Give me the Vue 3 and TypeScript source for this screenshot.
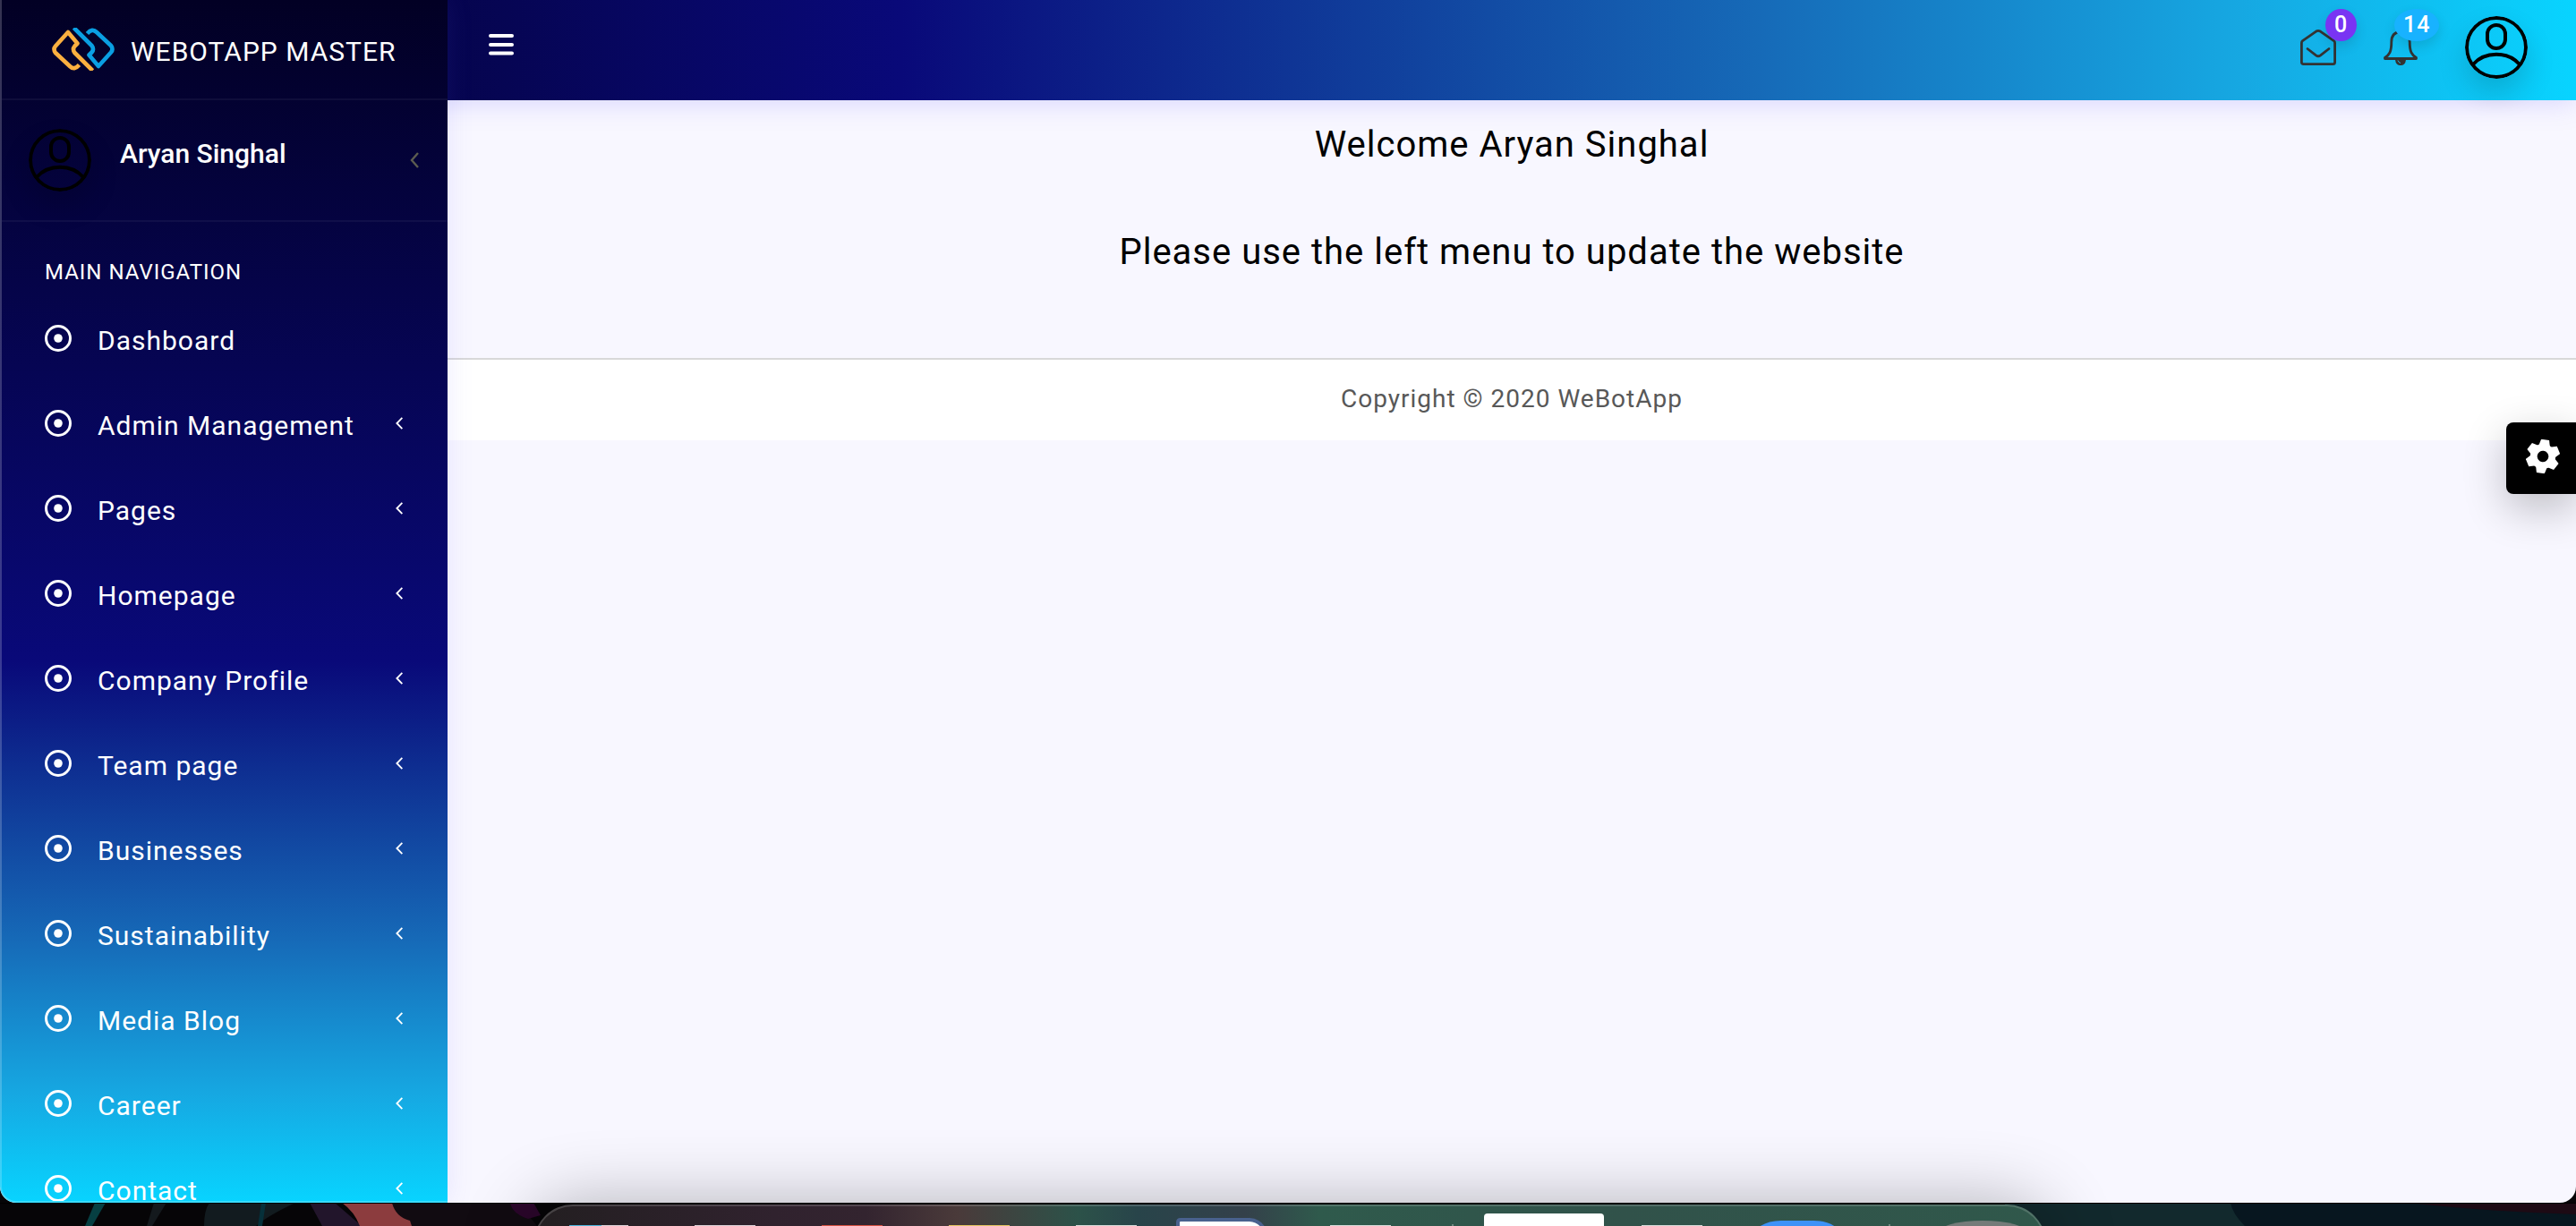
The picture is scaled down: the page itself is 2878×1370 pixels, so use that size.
<script setup lang="ts">
interface NavItem {
  label: string
  expandable: boolean
}

const labels: string[] = [
  'Dashboard',
  'Admin Management',
  'Pages',
  'Homepage',
  'Company Profile',
  'Team page',
  'Businesses',
  'Sustainability',
  'Media Blog',
  'Career',
  'Contact',
]

const navItems: NavItem[] = labels.map((label, index) => ({ label, expandable: index > 0 }))
</script>

<template>
  <div class="desktop">
    <div class="window">
      <aside class="sidebar">
        <a class="brand" href="#">
          <svg class="brand-logo" viewBox="0 0 70 48" fill="none" stroke-width="4.6" stroke-linejoin="round" aria-hidden="true">
            <path stroke="#fbb040" d="M30.500 41.500 Q25 48 20 43 L4 28 Q1 24 4 20.500 L18 5 L28.500 17.500 L25.500 20.500 Q22.500 24 25.500 28 L45.500 48" />
            <path stroke="#0a9fe3" d="M39.500 6.500 Q45 0 50 5 L66 20 Q69 24 66 27.500 L52 43 L41.500 30.500 L44.500 27.500 Q47.500 24 44.500 20 L24.500 0" />
          </svg>
          <span class="brand-name">WEBOTAPP MASTER</span>
        </a>

        <button class="user-panel" type="button">
          <svg class="avatar" viewBox="0 0 70 70" fill="none" stroke="#000" stroke-width="4" aria-hidden="true">
            <circle cx="35" cy="35" r="33" />
            <rect x="25" y="10" width="20" height="26" rx="10" />
            <path d="M9 54 C22 39 48 39 61 54" />
          </svg>
          <span class="user-name">Aryan Singhal</span>
          <svg class="user-arrow" viewBox="0 0 10 18" fill="none" stroke="#5c5c50" stroke-width="2.4" aria-hidden="true">
            <path d="M9 1 L2 9 L9 17" />
          </svg>
        </button>

        <h2 class="nav-title">MAIN NAVIGATION</h2>
        <nav>
          <ul class="nav-list">
            <li v-for="item in navItems" :key="item.label">
              <a class="nav-link" href="#">
                <svg class="nav-dot" viewBox="0 0 30 30" aria-hidden="true">
                  <circle cx="15" cy="15" r="13.5" fill="none" stroke="#fff" stroke-width="3" />
                  <circle cx="15" cy="15" r="4.8" fill="#fff" />
                </svg>
                <span class="nav-label">{{ item.label }}</span>
                <svg v-if="item.expandable" class="nav-arrow" viewBox="0 0 8 14" fill="none" stroke="#fff" stroke-width="1.9" aria-hidden="true">
                  <path d="M7.4 .8 L1.4 7 L7.4 13.2" />
                </svg>
              </a>
            </li>
          </ul>
        </nav>
      </aside>

      <div class="page">
        <header class="topbar">
          <button class="icon-button menu-button" type="button" aria-label="Toggle menu">
            <svg width="28" height="24" viewBox="0 0 28 24" stroke="#fff" stroke-width="4" stroke-linecap="round" aria-hidden="true">
              <path d="M2 2 H26 M2 12 H26 M2 21.500 H26" />
            </svg>
          </button>

          <div class="topbar-actions">
            <button class="icon-button" type="button" aria-label="Messages">
              <svg width="40" height="40" viewBox="0 0 40 40" fill="none" stroke="#333" stroke-width="2.8" stroke-linecap="round" stroke-linejoin="round" aria-hidden="true">
                <path d="M1.400 15 Q1.400 13.600 2.500 12.700 L17.600 2.100 Q20 .8 22.400 2.100 L37.500 12.700 Q38.600 13.600 38.600 15 V36.500 Q38.600 38.600 36.500 38.600 H3.500 Q1.400 38.600 1.400 36.500 Z" />
                <path d="M8 21.500 L17.500 28.800 Q20 30.600 22.500 28.800 L32 21.500" />
              </svg>
              <span class="badge badge-purple">0</span>
            </button>
            <button class="icon-button" type="button" aria-label="Notifications">
              <svg width="38" height="40" viewBox="0 0 38 40" fill="none" stroke="#333" stroke-width="2.800" stroke-linejoin="round" aria-hidden="true">
                <path d="M19 2.500 C11 3 8.800 8 8.800 14 C8.800 25 6.500 28 1.500 31.500 V32.500 H36.500 V31.500 C31.500 28 29.200 25 29.200 14 C29.200 8 27 3 19 2.500 Z" />
                <path d="M14.500 34 Q15 38.500 19 38.700 Q23 38.500 23.500 34 Z" fill="#333" />
                <path d="M16 34.500 Q17 37 19 37.500" stroke="#12bdf0" stroke-width="1" />
              </svg>
              <span class="badge badge-blue">14</span>
            </button>
            <button class="icon-button" type="button" aria-label="Account">
              <svg class="avatar" viewBox="0 0 70 70" fill="none" stroke="#000" stroke-width="4" aria-hidden="true">
                <circle cx="35" cy="35" r="33" />
                <rect x="25" y="10" width="20" height="26" rx="10" />
                <path d="M9 54 C22 39 48 39 61 54" />
              </svg>
            </button>
          </div>
        </header>

        <main class="content">
          <h1 class="message">Welcome Aryan Singhal</h1>
          <p class="message">Please use the left menu to update the website</p>
        </main>

        <footer class="footer">Copyright © 2020 WeBotApp</footer>
      </div>

      <button class="settings" type="button" aria-label="Settings">
        <svg width="38" height="38" viewBox="-19 -19 38 38" aria-hidden="true">
          <g transform="rotate(8)">
            <circle r="10.200" fill="none" stroke="#fff" stroke-width="7.800" />
            <path v-for="n in 6" :key="n" :transform="`rotate(${n * 60})`" fill="#fff" d="M-6.500 -11 L-4.500 -18.800 H4.500 L6.500 -11 Z" />
          </g>
        </svg>
      </button>
    </div>

    <div class="wallpaper">
      <svg class="wallpaper-art" viewBox="0 0 2878 26" preserveAspectRatio="none" aria-hidden="true">
        <rect width="2878" height="26" fill="#060507" />
        <rect x="2240" width="400" height="26" fill="#12292d" />
        <path fill="#07161f" d="M2492 0 H2878 V26 H2508 Q2494 12 2492 0 Z" />
        <path fill="#1d0a14" d="M2690 0 H2878 V13 Q2780 10 2690 0 Z" />
        <path fill="#063f42" d="M106 0 H118 L103 26 H95 Z" />
        <path fill="#14191d" d="M172 0 H186 L170 26 H164 Z" />
        <path fill="#121b1f" d="M234 0 H330 Q300 14 286 26 H228 Q228 8 234 0 Z" />
        <path fill="#06303a" d="M292 0 H297 L293 26 H288 Z" />
        <path fill="#22152b" d="M346 0 H374 L404 26 H360 Z" />
        <path fill="#8c3c3e" d="M382 0 H438 Q446 18 474 20 L466 26 H402 Q396 10 382 0 Z" />
        <path fill="#110b11" d="M438 0 H580 L600 26 H460 L458 20 Q442 16 438 0 Z" />
        <path fill="#2b062b" d="M570 0 H596 L604 14 L590 18 Q572 12 570 0 Z" />
        <rect y="0" width="2878" height="1" fill="#000" />
      </svg>
      <div class="dock">
        <svg class="dock-apps" viewBox="0 0 1686 22" preserveAspectRatio="xMidYMin slice" aria-hidden="true">
          <path stroke-width="2" stroke="#4eb6df" d="M38 22 H74" />
          <path stroke-width="2" stroke="#ddd3d8" d="M74 22 H104 M178 22 H246" />
          <path stroke-width="2" stroke="#d95343" d="M320 22 H388" />
          <path stroke-width="2" stroke="#e5c562" d="M462 22 H530" />
          <path stroke-width="2" stroke="#d8dcda" d="M604 22 H672 M888 22 H956 M1236 22 H1304" />
          <path fill="#fff" stroke="#49618e" stroke-width="4" d="M718 30 V18 Q718 15 721 15 H798 Q812 16 816 30" />
          <rect x="1060" y="8" width="134" height="30" rx="4" fill="#fff" />
          <path fill="#3d92f8" d="M1366 24 Q1376 16 1392 16 H1428 Q1444 16 1454 24 Z" />
          <ellipse cx="1617" cy="30" rx="50" ry="14" fill="#757b79" />
          <path stroke="#6f8980" stroke-width="2" d="M1025 20 V26 M1513 20 V26" />
        </svg>
      </div>
    </div>
  </div>
</template>

<style>
body {
  margin: 0;
}
</style>

<style scoped>
.desktop {
  display: flex;
  flex-direction: column;
  height: 100vh;
  overflow: hidden;
  background: #060507;
  color: #000;
  font-family: Roboto, "Liberation Sans", sans-serif;
  font-size: 30px;
  letter-spacing: 1px;
}

.desktop * {
  box-sizing: border-box;
}

button {
  padding: 0;
  border: 0;
  background: none;
  color: inherit;
  font: inherit;
  letter-spacing: inherit;
  cursor: pointer;
}

a {
  color: inherit;
  text-decoration: none;
}

svg {
  display: block;
  flex: none;
}

.window {
  position: relative;
  display: flex;
  flex: 1;
  min-height: 0;
  overflow: hidden;
  border-radius: 0 0 18px 18px;
  background: #f8f7ff;
}

/* Sidebar */
.sidebar {
  z-index: 2;
  flex: none;
  width: 500px;
  overflow: hidden;
  border: 0 solid rgba(255, 255, 255, 0.2);
  border-width: 0 0 2px 2px;
  border-bottom-left-radius: 18px;
  background: linear-gradient(180deg, #020024 0%, #090979 55%, #1669b7 78%, #16a8e2 91%, #08d4ff 100%) border-box;
  box-shadow: 0 0 30px rgba(100, 90, 250, 0.12);
  color: #fff;
}

.brand {
  display: flex;
  align-items: center;
  gap: 18px;
  height: 112px;
  padding-left: 56px;
  border-bottom: 2px solid rgba(255, 255, 255, 0.05);
}

.brand-logo {
  width: 70px;
  height: 48px;
}

.brand-name {
  padding-top: 4px;
}

.user-panel {
  display: flex;
  width: 100%;
  height: 136px;
  padding: 32px 32px 0 30px;
  border-bottom: 2px solid rgba(255, 255, 255, 0.05);
  text-align: left;
}

.avatar {
  width: 70px;
  height: 70px;
  border-radius: 50%;
  box-shadow: 0 16px 32px rgba(0, 0, 0, 0.15);
}

.user-name {
  flex: 1;
  padding-left: 32px;
  font-weight: 500;
  line-height: 56px;
  letter-spacing: 0;
}

.user-arrow {
  width: 10px;
  height: 18px;
  margin-top: 26px;
}

.nav-title {
  margin: 0;
  padding: 36px 0 0 48px;
  font-size: 24px;
  font-weight: 400;
  line-height: 40px;
}

.nav-list {
  margin: 0;
  padding: 6px 0 0;
  list-style: none;
}

.nav-link {
  display: flex;
  align-items: center;
  height: 95px;
  padding: 0 50px 0 48px;
}

.nav-dot {
  width: 30px;
  height: 30px;
}

.nav-label {
  flex: 1;
  padding: 6px 0 0 29px;
}

.nav-arrow {
  width: 8px;
  height: 14px;
}

/* Page */
.page {
  flex: 1;
  min-width: 0;
}

.topbar {
  position: relative;
  display: flex;
  align-items: center;
  justify-content: space-between;
  height: 112px;
  margin-left: -500px;
  padding: 0 54px 0 546px;
  background: linear-gradient(90deg, #020024 0%, #090979 35%, #1669b7 68%, #16a8e2 87%, #08d4ff 100%);
  box-shadow: 0 0 30px rgba(100, 90, 250, 0.25);
}

.icon-button {
  position: relative;
}

.menu-button {
  margin-bottom: 12px;
}

.topbar-actions {
  display: flex;
  align-items: center;
  gap: 53px;
  margin-bottom: 6px;
}

.badge {
  position: absolute;
  top: -23px;
  left: 28px;
  min-width: 34px;
  height: 36px;
  padding: 0 10px;
  border-radius: 50%;
  box-shadow: 0 6px 14px rgba(0, 0, 0, 0.12);
  color: #fff;
  font-size: 25px;
  font-weight: 500;
  line-height: 36px;
  text-align: center;
}

.badge-purple {
  background: #7934f3;
}

.badge-blue {
  left: 12px;
  background: #18b2ff;
}

.content {
  padding: 20px 0 88px;
  text-align: center;
}

.message {
  margin: 0;
  padding: 0 0 60px;
  font-size: 40px;
  font-weight: 400;
  line-height: 60px;
}

.content .message:last-child {
  padding: 0;
}

.footer {
  height: 92px;
  border-top: 2px solid #d8d8d9;
  background: #fff;
  color: #585858;
  font-size: 28px;
  line-height: 88px;
  text-align: center;
}

.settings {
  position: absolute;
  top: 472px;
  right: 0;
  display: flex;
  align-items: center;
  width: 78px;
  height: 80px;
  padding: 0 0 4px 22px;
  border-radius: 8px 0 0 8px;
  background: #000;
  box-shadow: 0 16px 48px rgba(0, 0, 0, 0.24);
}

/* Desktop strip under the window */
.wallpaper {
  position: relative;
  flex: none;
  height: 26px;
}

.wallpaper-art {
  width: 100%;
  height: 100%;
}

.dock {
  position: absolute;
  top: 2px;
  left: 596px;
  right: 592px;
  height: 120px;
  border: 2px solid rgba(255, 255, 255, 0.16);
  border-radius: 44px;
  background: linear-gradient(90deg, #231f21 0%, #30222e 16%, #33242f 22%, #4a3a3a 28%, #2c5249 36%, #28444a 40%, #34404a 47%, #2f5a4c 52%, #31524a 72%, #30584b 100%) border-box;
  box-shadow: 0 0 80px rgba(0, 0, 0, 0.3);
}

.dock-apps {
  width: 100%;
  height: 22px;
}
</style>
